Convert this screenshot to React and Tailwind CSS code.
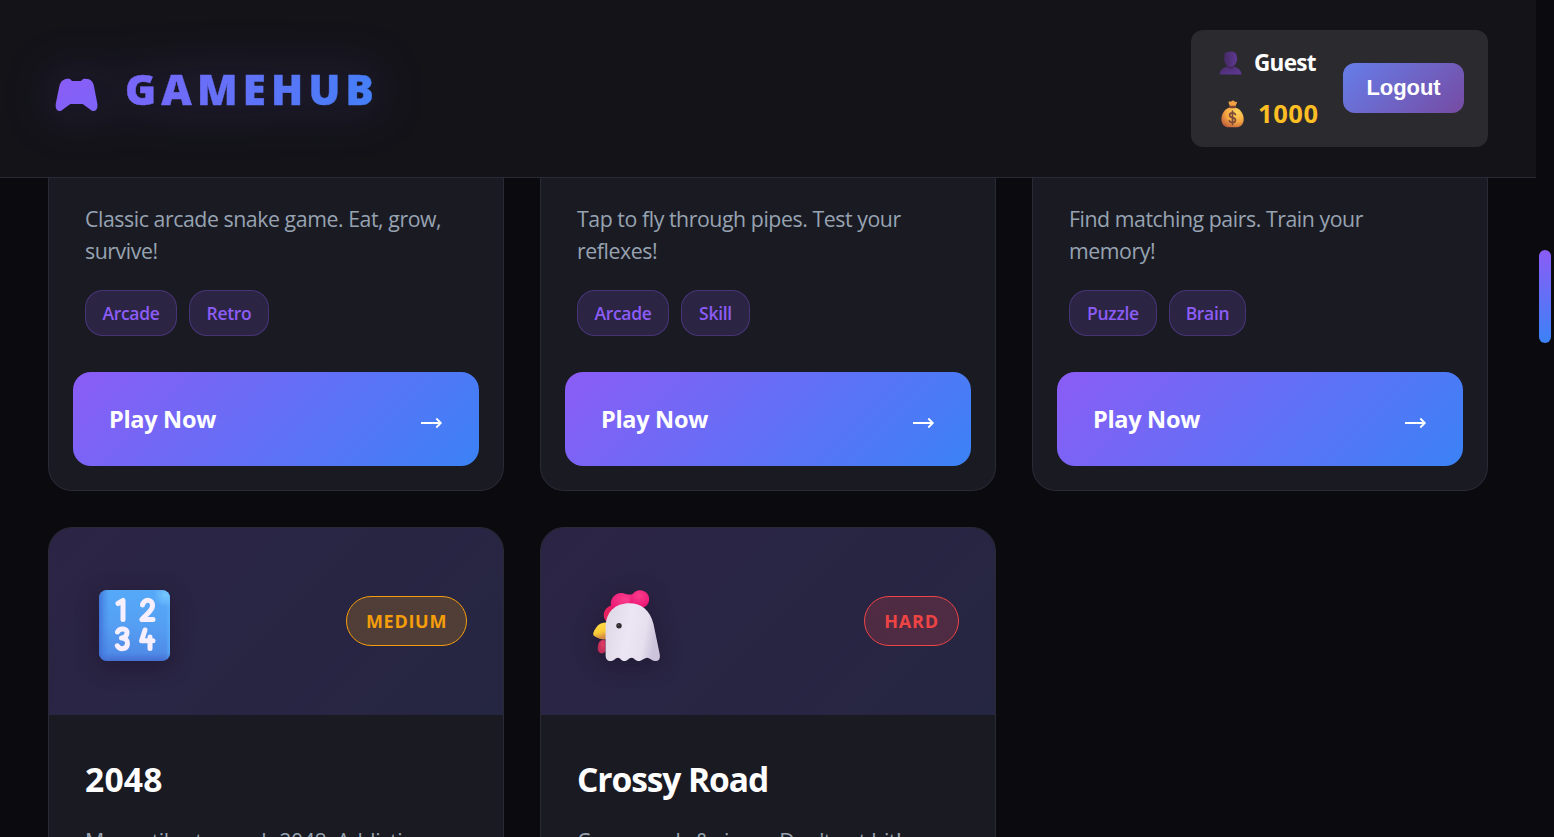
import React from "react";

const featured = [
  { lines: ["Classic arcade snake game. Eat, grow,", "survive!"], tags: [["Arcade", "w-[92px]"], ["Retro", "w-[80px]"]] },
  { lines: ["Tap to fly through pipes. Test your", "reflexes!"], tags: [["Arcade", "w-[92px]"], ["Skill", "w-[69px]"]] },
  { lines: ["Find matching pairs. Train your", "memory!"], tags: [["Puzzle", "w-[88px]"], ["Brain", "w-[77px]"]] },
];

function Gamepad() {
  return (
    <svg width="43" height="34" viewBox="0 0 43 34" className="block">
      <defs>
        <linearGradient id="pad" x1="0" y1="0" x2="1" y2="1">
          <stop offset="0" stopColor="#8a5cf6" />
          <stop offset="1" stopColor="#7e64f8" />
        </linearGradient>
      </defs>
      <path
        d="M10 1.200C11.800 0.600 14 0.600 15.300 1.200L17 3H26L27.700 1.200C29.500 0.600 32 0.600 34 1.300C36.500 2.200 38 4.400 38.800 7.500L42.300 25.500C43 29.500 41.800 32.600 39 33C37.300 33.200 36 32.300 34.500 31L28 26.300C27.600 26.100 27.200 26 26.500 26H16.500C15.800 26 15.400 26.100 15 26.300L8.500 31C7 32.300 5.700 33.200 4.200 33C1.300 32.600 0.200 29.500 0.800 25.500L4.500 7.500C5.300 4.400 7 2.200 10 1.200Z"
        fill="url(#pad)"
      />
    </svg>
  );
}

function Person() {
  return (
    <svg width="24" height="24" viewBox="0 0 24 24" className="block">
      <defs>
        <linearGradient id="head" x1="0" y1="0" x2="1" y2="0">
          <stop offset="0" stopColor="#452a63" />
          <stop offset="1" stopColor="#5f3994" />
        </linearGradient>
        <linearGradient id="bust" x1="0" y1="0" x2="1" y2="1">
          <stop offset="0" stopColor="#482b68" />
          <stop offset="1" stopColor="#603a99" />
        </linearGradient>
      </defs>
      <path d="M0.500 23.500C1 18.800 4.500 16 9 15.500H14C18.500 16 22 18.800 22.500 23.500Z" fill="url(#bust)" />
      <path d="M8 12H15V15.800C13.500 18.200 9.500 18.200 8 15.800Z" fill="#3f2558" />
      <path d="M5.300 3.800C5.800 1.600 8 0.500 11.500 0.500C15.300 0.500 17.500 2 17.800 5V7C18.500 7.200 18.500 9 17.500 10.500C16.800 14 14.500 16 11.500 16C8.500 16 6.500 14 5.700 10.500C4.800 9.500 4.700 7.500 5.300 7Z" fill="url(#head)" />
    </svg>
  );
}

function MoneyBag() {
  return (
    <svg width="24" height="28" viewBox="0 0 24 28" className="block">
      <defs>
        <radialGradient id="sack" cx="0.68" cy="0.25" r="0.85">
          <stop offset="0" stopColor="#ffd65c" />
          <stop offset="0.55" stopColor="#f5a843" />
          <stop offset="1" stopColor="#bf5d3c" />
        </radialGradient>
      </defs>
      <path d="M7.700 3C7 2 8 1.200 9.100 1.800L10.500 1.200C11.200 0.200 12.700 0.200 13.300 1.200L14.500 1.900C15.900 1.300 16.500 2.300 15.800 3.300L14.300 6.500H9Z" fill="#f2a044" />
      <path d="M8.500 7.500H14.500C19.500 9.300 22.700 14 22.700 19C22.700 24.500 19.800 27.300 15 27.300H8C3.300 27.300 0.400 24.500 0.400 19C0.400 14 3.500 9.300 8.500 7.500Z" fill="url(#sack)" />
      <rect x="8.300" y="5.800" width="6.600" height="2.400" rx="1" fill="#7d4536" />
      <path d="M14.500 14.500C13.800 13.300 12.800 12.900 11.500 12.900C9.700 12.900 8.600 13.800 8.600 15.200C8.600 18.500 14.500 16.700 14.500 20.100C14.500 21.700 13.200 22.600 11.500 22.600C10 22.600 8.900 22 8.300 20.800M11.500 11.200V24.400" fill="none" stroke="#7c4b39" strokeWidth="1.7" strokeLinecap="round" />
    </svg>
  );
}

function NumbersTile() {
  return (
    <svg width="72" height="72" viewBox="0 0 72 72" className="block overflow-visible drop-shadow-[0_5px_11px_rgba(20,12,30,0.45)]">
      <defs>
        <linearGradient id="tile" x1="0" y1="0" x2="0" y2="1">
          <stop offset="0" stopColor="#55a9f8" />
          <stop offset="0.5" stopColor="#559ff3" />
          <stop offset="0.88" stopColor="#4f8ce8" />
          <stop offset="1" stopColor="#456ed2" />
        </linearGradient>
        <linearGradient id="tileSide" x1="0" y1="0" x2="1" y2="0">
          <stop offset="0" stopColor="#3b66cf" stopOpacity="0.8" />
          <stop offset="0.15" stopColor="#4685e6" stopOpacity="0" />
          <stop offset="0.94" stopColor="#5db8ff" stopOpacity="0" />
          <stop offset="1" stopColor="#5db8ff" stopOpacity="0.6" />
        </linearGradient>
        <radialGradient id="tileShine" cx="0.94" cy="0.07" r="0.17">
          <stop offset="0" stopColor="#77c7ff" />
          <stop offset="1" stopColor="#77c7ff" stopOpacity="0" />
        </radialGradient>
      </defs>
      <rect x="0" y="0" width="71" height="71" rx="8" fill="url(#tile)" />
      <rect x="0" y="0" width="71" height="71" rx="8" fill="url(#tileSide)" />
      <rect x="0" y="0" width="71" height="71" rx="8" fill="url(#tileShine)" />
      <g fill="none" stroke="#f7eefe" strokeWidth="5" strokeLinecap="round" strokeLinejoin="round">
        <path d="M19 13.500L24 10.500V29.500" />
        <path d="M43.500 15C44.500 8.500 54 8.500 53.500 16C53.200 21 46 25.500 42.800 29.500H54" />
        <path d="M18.500 42C20.500 37.500 29 38 28 43.500C27.500 46.500 24.500 48 22.500 48C26.500 48 28.800 50.500 28.500 53.500C28 60 20.500 59.800 18.300 55.800" />
        <path d="M46 40L42.600 50.800H54M51 47V58.500" />
      </g>
    </svg>
  );
}

function Chicken() {
  return (
    <svg width="68" height="72" viewBox="0 0 68 72" className="block overflow-visible drop-shadow-[0_5px_11px_rgba(20,12,30,0.45)]">
      <defs>
        <radialGradient id="combGlow" cx="0.5" cy="0.3" r="0.65">
          <stop offset="0" stopColor="#fb3c8c" />
          <stop offset="1" stopColor="#ea1673" />
        </radialGradient>
        <linearGradient id="face" x1="0" y1="0" x2="1" y2="0.2">
          <stop offset="0" stopColor="#ddd6e5" />
          <stop offset="0.5" stopColor="#ece6f4" />
          <stop offset="0.8" stopColor="#e5dfee" />
          <stop offset="1" stopColor="#cdc4db" />
        </linearGradient>
        <linearGradient id="beak" x1="0" y1="0" x2="0.25" y2="1">
          <stop offset="0" stopColor="#ffdf4b" />
          <stop offset="0.65" stopColor="#f9cc37" />
          <stop offset="1" stopColor="#d38a43" />
        </linearGradient>
        <radialGradient id="wattle" cx="0.65" cy="0.35" r="0.7">
          <stop offset="0" stopColor="#df3e66" />
          <stop offset="1" stopColor="#b92a55" />
        </radialGradient>
      </defs>
      <path d="M13 31C9 27 10 18 18 15.500H32V26Z" fill="#ea2160" />
      <path d="M18 16C16.500 8 23.500 1.500 30.500 3.300C34 4.500 38 5.500 40.500 3.400L46 16L37 22L20 24Z" fill="url(#combGlow)" />
      <path d="M38.500 5C41 2.500 43 0.200 47 0.200C52 0.200 56.200 4 56.200 9C56.200 14.500 52 18.200 46.500 18.200L36 16Z" fill="url(#combGlow)" />
      <path d="M6 52.500C7.500 50 10 49 12.500 50.500V61C11 64 8 63.800 6.300 62.500C4 60.500 4.300 56 6 52.500Z" fill="url(#wattle)" />
      <path d="M14 32.500C7 32 3 36 0.500 42.500C-0.200 44.500 0.500 45.500 2 46.500C6 49 10.500 50 14 49Z" fill="url(#beak)" />
      <path d="M12.600 38C12.600 22 22 13.300 36.500 13.300C48 13.300 57 20 60.500 34L66.700 64C67.500 69.500 65.500 71 62.500 71C59.500 71 57.500 68.500 54.300 67.700C50.500 68 49 71 45.800 71C42.300 71 41 67.700 38.800 67.700C35.500 67.700 34.800 71 31.500 71C28 71 27.500 67.700 25 67.700C22 67.700 21.500 71 17.500 71C14.500 71 12.600 69 12.600 65Z" fill="url(#face)" />
      <circle cx="26" cy="35.700" r="2.700" fill="#302b30" />
      <circle cx="25.500" cy="35" r="0.700" fill="#655e60" />
    </svg>
  );
}

function FeaturedCard({ game }) {
  return (
    <article className="h-[313px] rounded-b-[24px] border border-t-0 border-[#2a2a36] bg-[#1a1a23] px-6 pt-[25px]">
      <div className="px-3">
        <p className="h-[64px] whitespace-nowrap text-[21.3px] leading-8 tracking-[-0.44px] text-[#97a3b1]">
          {game.lines.map((line) => (
            <span className="block" key={line}>{line}</span>
          ))}
        </p>
        <div className="mt-[23px] flex gap-3">
          {game.tags.map(([name, width]) => (
            <span key={name} className={`flex h-[46px] ${width} items-center justify-center rounded-[18px] border border-[#8b5cf6]/30 bg-[#8b5cf6]/15 text-[17.5px] font-semibold tracking-[-0.3px] text-[#8b5cf6]`}>
              {name}
            </span>
          ))}
        </div>
      </div>
      <button className="mt-9 flex h-[94px] w-full items-center justify-between rounded-[18px] bg-[linear-gradient(135deg,#8b5cf6,#3b82f6)] px-9 text-white">
        <span className="pt-[2px] text-[23.5px] font-bold tracking-[-0.3px]">Play Now</span>
        <svg width="22" height="14" viewBox="0 0 22 14" className="mt-2" fill="none" stroke="currentColor" strokeWidth="1.8">
          <path d="M0 7H20M15.300 2.500L19.800 7L15.300 11.500" />
        </svg>
      </button>
    </article>
  );
}

function GameCard({ icon, iconPad, badge, badgeClass, title, titleClass, description }) {
  return (
    <article className="h-[600px] overflow-hidden rounded-[24px] border border-[#2a2a36] bg-[#1a1a23]">
      <div className="flex h-[187px] items-center justify-between bg-[linear-gradient(135deg,#2c2445,#252642)] pr-9">
        <div className={`pt-[9px] ${iconPad}`}>{icon}</div>
        <span className={`mb-[2px] flex h-[50px] items-center justify-center rounded-full border pt-px text-[18px] font-bold ${badgeClass}`}>{badge}</span>
      </div>
      <div className="px-9 pt-[39px]">
        <h3 className={`h-[51px] whitespace-nowrap text-[33.6px] font-bold leading-[51px] text-white ${titleClass}`}>{title}</h3>
        <p className="mt-[20px] whitespace-nowrap text-[21.4px] leading-8 tracking-[-0.42px] text-[#97a3b1]">{description}</p>
      </div>
    </article>
  );
}

export default function App() {
  return (
    <div className="flex h-[837px] w-[1554px] overflow-hidden bg-[#0a0a0f] font-['Open_Sans','Noto_Sans',sans-serif]">
      <div className="flex w-[1536px] flex-col">
        <header className="flex h-[178px] shrink-0 items-center justify-between border-b border-[#2a2a36] bg-[#131318] px-12">
          <div className="flex items-center pl-[7px] drop-shadow-[0_0_26px_rgba(139,92,246,0.3)]">
            <div className="pt-3">
              <Gamepad />
            </div>
            <span className="ml-[27px] bg-[linear-gradient(100deg,#7a66f8,#4380f7)] bg-clip-text pt-px font-['Noto_Sans','Open_Sans',sans-serif] text-[42px] font-black leading-[50px] tracking-[5.200px] text-transparent [-webkit-text-stroke:0.5px_transparent]">GAMEHUB</span>
          </div>
          <div className="flex h-[117px] w-[297px] items-center justify-between rounded-xl bg-[#2b2a2f] pl-7 pr-6">
            <div className="flex flex-col gap-[19px] pb-px">
              <div className="flex h-8 items-center gap-[11px]">
                <Person />
                <span className="text-[22.5px] font-bold tracking-[-0.7px] text-white">Guest</span>
              </div>
              <div className="flex h-8 items-center gap-[13px] pl-[2px]">
                <MoneyBag />
                <span className="text-[25.5px] font-bold tracking-[0.6px] text-[#fbbf24]">1000</span>
              </div>
            </div>
            <button className="mb-[2px] h-[50px] w-[121px] rounded-xl bg-[linear-gradient(135deg,#667eea,#764ba2)] font-['Liberation_Sans',Arial,sans-serif] text-[22px] font-bold tracking-[-0.1px] text-white">Logout</button>
          </div>
        </header>
        <main className="grid grid-cols-3 gap-9 px-12">
          {featured.map((game) => (
            <FeaturedCard key={game.lines[0]} game={game} />
          ))}
          <GameCard
            icon={<NumbersTile />}
            iconPad="pl-[50px]"
            badge="MEDIUM"
            badgeClass="w-[121px] border-[#f59e0b] bg-[#f59e0b]/20 tracking-[0.7px] text-[#f59e0b]"
            title="2048"
            titleClass="tracking-[0.2px]"
            description="Merge tiles to reach 2048. Addictive"
          />
          <GameCard
            icon={<Chicken />}
            iconPad="pl-[51.500px]"
            badge="HARD"
            badgeClass="w-[95px] border-[#ef4444] bg-[#ef4444]/20 tracking-[0.8px] text-[#ef4444]"
            title="Crossy Road"
            titleClass="tracking-[-1.1px]"
            description="Cross roads & rivers. Don't get hit!"
          />
        </main>
      </div>
      <div className="w-[18px] px-[3px] pt-[250px]">
        <div className="h-[93px] rounded-full bg-[linear-gradient(180deg,#8b5cf6,#3b82f6)]" />
      </div>
    </div>
  );
}
